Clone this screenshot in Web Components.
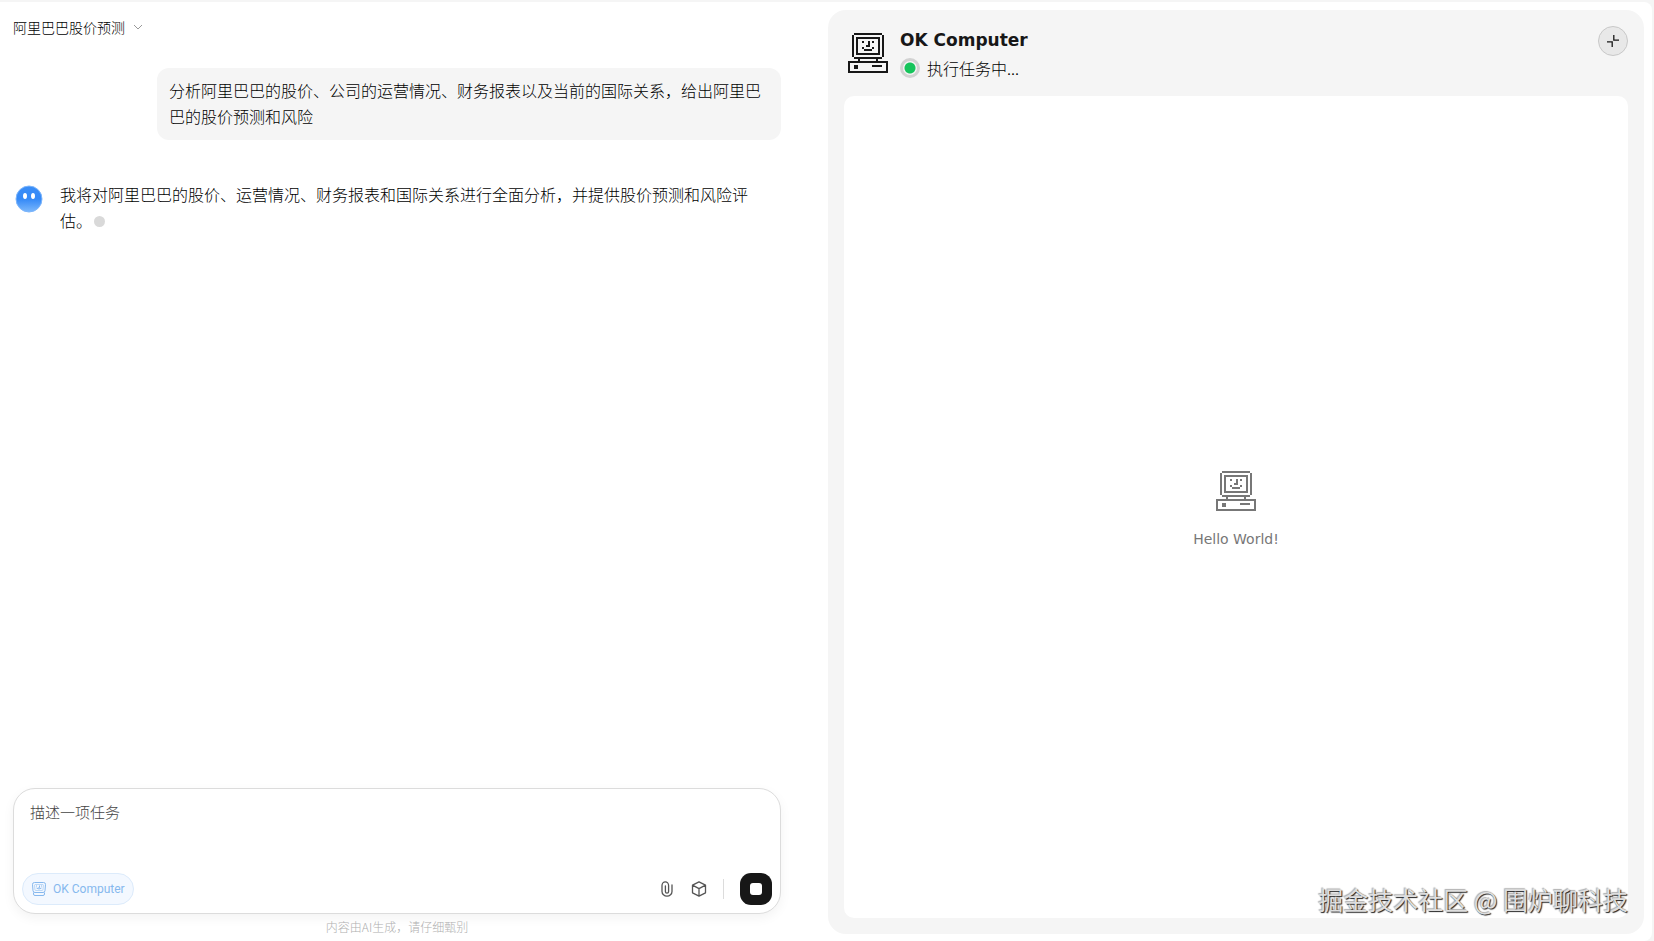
<!DOCTYPE html>
<html lang="zh-CN">
<head>
<meta charset="utf-8">
<meta name="viewport" content="width=device-width, initial-scale=1">
<title>阿里巴巴股价预测</title>
<style>
    :root{
        --color-ink: #171717;
        --color-muted: #555555;
        --color-hint: #b0b0b0;
        --color-line: #dcdcdc;
        --color-surface: #f5f5f5;
        --color-green: #16c45b;
        --font-ui: Roboto, "Noto Sans CJK SC", sans-serif;
        --font-cjk: "Noto Sans CJK SC", sans-serif;
        --font-display: "DejaVu Sans", sans-serif;
    }
    body{
        margin: 0;
        background: var(--color-surface);
        color: #000000;
        font-family: var(--font-cjk);
        font-weight: 300;
    }
</style>
</head>
<body>
<ok-app>
    <ok-chat slot="chat" title-text="阿里巴巴股价预测">
        <ok-user-message>分析阿里巴巴的股价、公司的运营情况、财务报表以及当前的国际关系，给出阿里巴巴的股价预测和风险</ok-user-message>
        <ok-bot-message>我将对阿里巴巴的股价、运营情况、财务报表和国际关系进行全面分析，并提供股价预测和风险评估。</ok-bot-message>
        <ok-composer slot="composer"></ok-composer>
    </ok-chat>
    <ok-panel slot="panel">
        <span slot="name">OK Computer</span>
        <span slot="status">执行任务中...</span>
        <span slot="empty">Hello World!</span>
    </ok-panel>
</ok-app>

<script>
class OkApp extends HTMLElement {
    constructor() {
        super();
        this.attachShadow({ mode: "open" });
    }
    connectedCallback() {
        this.shadowRoot.innerHTML = `
        <style>
            :host{
                display: block;
                box-sizing: border-box;
                height: 100vh;
                padding: 2px 2px 0 0;
            }
            .Shell{
                position: relative;
                box-sizing: border-box;
                height: 100%;
                display: grid;
                grid-template-columns: minmax(0, 1fr) minmax(0, 1fr);
                gap: 4px;
                background: #ffffff;
                border-radius: 0 8px 8px 0;
            }
            .Watermark{
                position: absolute;
                right: 24px;
                bottom: 24px;
                color: #dedede;
                font-size: 25px;
                font-weight: 400;
                line-height: 36px;
                white-space: nowrap;
                text-shadow: 1px 1px 1px #222222, -1px -1px 1px #b0b0b0;
                pointer-events: none;
            }
        </style>
        <div class="Shell">
            <slot name="chat"></slot>
            <slot name="panel"></slot>
            <div class="Watermark">掘金技术社区 @ 围炉聊科技</div>
        </div>
        `;
    }
}

class OkChat extends HTMLElement {
    constructor() {
        super();
        this.attachShadow({ mode: "open" });
    }
    connectedCallback() {
        this.shadowRoot.innerHTML = `
        <style>
            :host{
                display: flex;
                flex-direction: column;
                min-height: 0;
                padding: 0 43px 0 13px;
            }
            header{
                height: 50px;
                display: flex;
                align-items: center;
            }
            .Title{
                display: flex;
                align-items: center;
                gap: 8px;
                padding: 0;
                border: 0;
                background: none;
                color: inherit;
                font: inherit;
                font-size: 14px;
                line-height: 20px;
                cursor: pointer;
            }
            .Messages{
                flex: 1;
                min-height: 0;
                overflow: auto;
                display: flex;
                flex-direction: column;
                gap: 41px;
                padding-top: 16px;
            }
            footer{
                height: 27px;
                color: var(--color-hint);
                font-size: 12px;
                line-height: 26px;
                text-align: center;
            }
        </style>
        <header>
            <button class="Title" type="button">
                <span>${this.getAttribute("title-text")}</span>
                <svg width="10" height="6" viewBox="0 0 10 6" fill="none" stroke="#999999" aria-hidden="true"><path d="M1 1l4 4 4-4"/></svg>
            </button>
        </header>
        <div class="Messages"><slot></slot></div>
        <slot name="composer"></slot>
        <footer>内容由AI生成，请仔细甄别</footer>
        `;
    }
}

class OkUserMessage extends HTMLElement {
    constructor() {
        super();
        this.attachShadow({ mode: "open" });
    }
    connectedCallback() {
        this.shadowRoot.innerHTML = `
        <style>
            :host{
                display: block;
                align-self: flex-end;
                margin-left: 144px;
                padding: 9px 12px 11px;
                background: var(--color-surface);
                border-radius: 12px;
                font-size: 16px;
                line-height: 26px;
            }
        </style>
        <slot></slot>
        `;
    }
}

class OkBotMessage extends HTMLElement {
    constructor() {
        super();
        this.attachShadow({ mode: "open" });
    }
    connectedCallback() {
        this.shadowRoot.innerHTML = `
        <style>
            :host{
                display: flex;
                gap: 16px;
                padding-right: 24px;
                font-size: 16px;
                line-height: 26px;
            }
            .Avatar{
                flex: none;
                margin: 3px 0 0 1px;
            }
            .Text{
                margin: 0;
            }
            .Dot{
                display: inline-block;
                width: 11px;
                height: 11px;
                margin-left: 2px;
                border-radius: 50%;
                background: #d9d9d9;
            }
        </style>
        <svg class="Avatar" width="30" height="30" viewBox="0 0 30 30" aria-hidden="true">
            <defs>
                <linearGradient id="face" x1="0" y1="0" x2="0" y2="1">
                    <stop offset="0" stop-color="#3a8df7"/>
                    <stop offset="0.5" stop-color="#3489f7"/>
                    <stop offset="1" stop-color="#7cb8fc"/>
                </linearGradient>
            </defs>
            <circle cx="15" cy="15" r="13" fill="url(#face)" stroke="#7cb5fb"/>
            <ellipse cx="11" cy="12" rx="2" ry="3" fill="#ffffff"/>
            <ellipse cx="19" cy="12" rx="2" ry="3" fill="#ffffff"/>
        </svg>
        <p class="Text"><slot></slot><span class="Dot"></span></p>
        `;
    }
}

class OkComposer extends HTMLElement {
    constructor() {
        super();
        this.attachShadow({ mode: "open" });
    }
    connectedCallback() {
        this.shadowRoot.innerHTML = `
        <style>
            :host{
                display: block;
            }
            form{
                box-sizing: border-box;
                display: flex;
                flex-direction: column;
                gap: 8px;
                padding: 9px 8px 8px;
                border: 1px solid var(--color-line);
                border-radius: 22px;
                background: #ffffff;
                box-shadow: 0 4px 12px rgba(0, 0, 0, 0.05);
            }
            textarea{
                box-sizing: border-box;
                height: 67px;
                padding: 2px 8px;
                border: 0;
                outline: 0;
                resize: none;
                background: none;
                color: var(--color-ink);
                font: inherit;
                font-size: 15px;
                line-height: 24px;
            }
            textarea::placeholder{
                color: #444444;
                opacity: 1;
            }
            button{
                padding: 0;
                border: 0;
                background: none;
                color: inherit;
                font: inherit;
                cursor: pointer;
            }
            svg{
                display: block;
            }
            .Bar{
                display: flex;
                align-items: center;
                justify-content: space-between;
            }
            .Chip{
                box-sizing: border-box;
                height: 32px;
                display: flex;
                align-items: center;
                gap: 6px;
                padding: 0 8px;
                border: 1px solid #dcebfb;
                border-radius: 16px;
                background: #f3f8ff;
                color: #86b8ee;
                font-family: var(--font-ui);
                font-size: 12px;
                font-weight: 400;
            }
            .Tools{
                display: flex;
                align-items: center;
                gap: 16px;
                color: var(--color-muted);
            }
            .Divider{
                width: 1px;
                height: 20px;
                background: var(--color-line);
            }
            .Stop{
                width: 32px;
                height: 32px;
                display: grid;
                place-items: center;
                border-radius: 11px;
                background: var(--color-ink);
            }
            .Stop span{
                width: 12px;
                height: 12px;
                border-radius: 3px;
                background: #ffffff;
            }
        </style>
        <form>
            <textarea aria-label="描述一项任务" placeholder="描述一项任务"></textarea>
            <div class="Bar">
                <button class="Chip" type="button">
                    <svg width="16" height="16" viewBox="0 0 16 16" fill="none" stroke="currentColor" aria-hidden="true">
                        <path d="M3.5 1.5h9q2.2 0 2 2.2l-.5 6q-.2 1.8-2 1.8H4q-1.8 0-2-1.8l-.5-6q-.2-2.2 2-2.2z"/>
                        <path d="M4.5 3.5h7q1 0 .9 1l-.4 4q-.1 1-1.1 1H5q-1 0-1.1-1l-.4-4q0-1 1-1z" stroke-opacity="0.5"/>
                        <path d="M5.5 4.5v1M10.5 4.5v1M8.5 4.5v2H7.5M5.5 7q2.500 2 5 0M2.5 11.5v1.5q0 1.5 1.5 1.5h8q1.5 0 1.5-1.5v-1.5"/>
                    </svg>
                    <span>OK Computer</span>
                </button>
                <div class="Tools">
                    <button type="button" aria-label="添加附件">
                        <svg width="16" height="16" viewBox="0 0 16 16" fill="none" stroke="currentColor" stroke-width="1.3" stroke-linecap="round" aria-hidden="true">
                            <path d="M13 4v6.5a5 4.7 0 0 1-10 0V4.5a3.3 3.7 0 0 1 6.6 0v6a1.6 1.6 0 0 1-3.2 0V5"/>
                        </svg>
                    </button>
                    <button type="button" aria-label="工具">
                        <svg width="16" height="16" viewBox="0 0 16 16" fill="none" stroke="currentColor" stroke-width="1.3" stroke-linejoin="round" aria-hidden="true">
                            <path d="M8 .8l6.500 3.400v7.600L8 15.200l-6.500-3.400V4.200zM1.500 4.200L8 7.600l6.500-3.400M8 7.600v7.600"/>
                        </svg>
                    </button>
                    <span class="Divider"></span>
                    <button class="Stop" type="button" aria-label="停止"><span></span></button>
                </div>
            </div>
        </form>
        `;
    }
}

// Pixel-art computer on a 20x20 grid, drawn in the current colour.
class OkPixelComputer extends HTMLElement {
    constructor() {
        super();
        this.attachShadow({ mode: "open" });
    }
    connectedCallback() {
        this.shadowRoot.innerHTML = `
        <style>
            :host{
                display: block;
                width: 40px;
                height: 40px;
            }
            svg{
                display: block;
            }
        </style>
        <svg width="40" height="40" viewBox="0 0 20 20" fill="currentColor" shape-rendering="crispEdges" aria-hidden="true">
            <path d="M3 0h14v1H3zM2 1h1v11H2zM17 1h1v11h-1zM3 12h14v1H3z"/>
            <path fill-rule="evenodd" d="M4 2h12v9H4zM5 3v7h10V3z"/>
            <path d="M7 4h1v1H7zM12 4h1v1h-1zM10 4h1v3H9V6h1zM7 7h1v1H7zM12 7h1v1h-1zM8 8h4v1H8z"/>
            <path d="M5 13h1v1H5zM14 13h1v1h-1z"/>
            <path fill-rule="evenodd" d="M0 14h20v6H0zM1 15v4h18v-4z"/>
            <path d="M3 16h2v2H3zM12 16h5v1h-5z"/>
        </svg>
        `;
    }
}

class OkPanel extends HTMLElement {
    constructor() {
        super();
        this.attachShadow({ mode: "open" });
    }
    connectedCallback() {
        this.shadowRoot.innerHTML = `
        <style>
            :host{
                display: flex;
                flex-direction: column;
                min-height: 0;
                margin: 8px 8px 7px 0;
                padding: 0 16px 16px;
                background: var(--color-surface);
                border-radius: 18px;
            }
            header{
                height: 86px;
                box-sizing: border-box;
                display: flex;
                align-items: flex-start;
                gap: 12px;
                padding: 16px 0 0 4px;
            }
            header ok-pixel-computer{
                margin-top: 7px;
                color: var(--color-ink);
            }
            .Info{
                flex: 1;
            }
            h2{
                margin: 0;
                color: var(--color-ink);
                font-family: var(--font-display);
                font-size: 17px;
                font-weight: 700;
                line-height: 28px;
            }
            .Status{
                display: flex;
                align-items: center;
                gap: 7px;
                font-size: 16px;
                line-height: 28px;
            }
            .Light{
                box-sizing: border-box;
                width: 20px;
                height: 20px;
                border: 3px solid #d2d2d2;
                border-radius: 50%;
                background: radial-gradient(circle, var(--color-green) 5px, #f4f4f4 6px);
            }
            button{
                box-sizing: border-box;
                width: 30px;
                height: 30px;
                display: grid;
                place-items: center;
                padding: 0;
                border: 1px solid #c8c8c8;
                border-radius: 50%;
                background: #e8e8e8;
                color: var(--color-ink);
                cursor: pointer;
            }
            .Screen{
                flex: 1;
                display: flex;
                flex-direction: column;
                align-items: center;
                justify-content: center;
                gap: 16px;
                padding-top: 8px;
                background: #ffffff;
                border-radius: 10px;
                color: #777777;
                font-family: var(--font-display);
                font-size: 14px;
                font-weight: 400;
                line-height: 24px;
            }
        </style>
        <header>
            <ok-pixel-computer></ok-pixel-computer>
            <div class="Info">
                <h2><slot name="name"></slot></h2>
                <div class="Status"><span class="Light"></span><slot name="status"></slot></div>
            </div>
            <button type="button" aria-label="收起">
                <svg width="14" height="14" viewBox="0 0 14 14" fill="none" stroke="currentColor" stroke-width="1.3" aria-hidden="true">
                    <path d="M7.800 1v5.200H13M1 7.800h5.200V13"/>
                </svg>
            </button>
        </header>
        <div class="Screen">
            <ok-pixel-computer></ok-pixel-computer>
            <slot name="empty"></slot>
        </div>
        `;
    }
}

customElements.define("ok-pixel-computer", OkPixelComputer);
customElements.define("ok-user-message", OkUserMessage);
customElements.define("ok-bot-message", OkBotMessage);
customElements.define("ok-composer", OkComposer);
customElements.define("ok-chat", OkChat);
customElements.define("ok-panel", OkPanel);
customElements.define("ok-app", OkApp);
</script>
</body>
</html>
